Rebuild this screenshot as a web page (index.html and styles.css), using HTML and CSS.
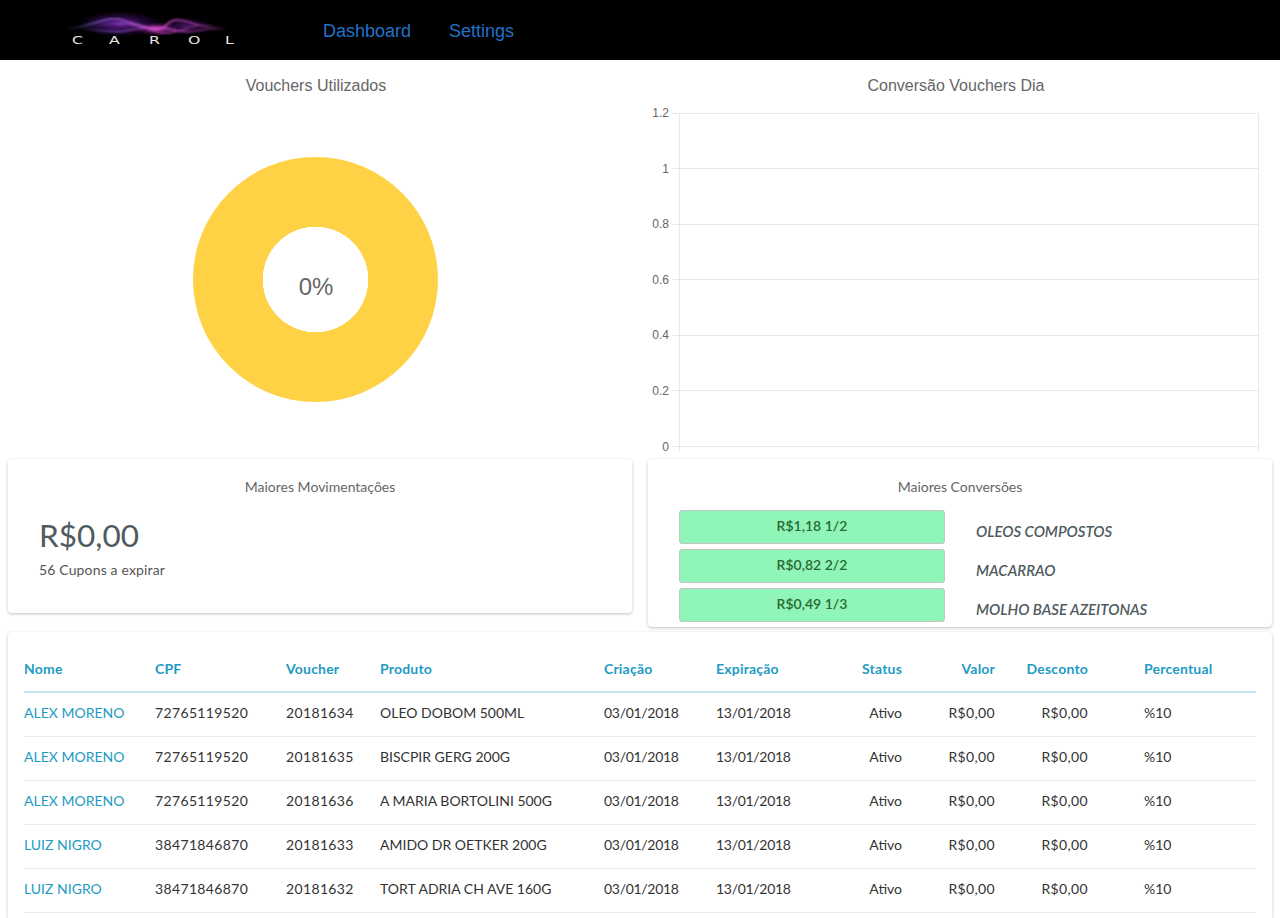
FILE: index.html
```html
<!DOCTYPE html>
<html lang="pt-BR">
<head>
<meta charset="utf-8">
<title>Carol Dashboard</title>
<link rel="stylesheet" href="styles.css">
</head>
<body>
<header class="navbar">
  <svg class="logo" width="190" height="50" viewBox="0 0 190 50" aria-label="Carol">
    <defs>
      <linearGradient id="wave" x1="0" x2="1" y1="0" y2="0">
        <stop offset="0" stop-color="#6a7fd0" stop-opacity="0"/>
        <stop offset=".2" stop-color="#7a5cc8"/>
        <stop offset=".55" stop-color="#e458de"/>
        <stop offset=".8" stop-color="#a03aa0"/>
        <stop offset="1" stop-color="#803080" stop-opacity="0"/>
      </linearGradient>
      <radialGradient id="glow">
        <stop offset="0" stop-color="#8226b8" stop-opacity=".85"/>
        <stop offset="1" stop-color="#4a1080" stop-opacity="0"/>
      </radialGradient>
      <radialGradient id="pink">
        <stop offset="0" stop-color="#c834b8" stop-opacity=".9"/>
        <stop offset="1" stop-color="#801080" stop-opacity="0"/>
      </radialGradient>
      <filter id="soft"><feGaussianBlur stdDeviation=".8"/></filter>
    </defs>
    <ellipse cx="60" cy="19" rx="42" ry="13" fill="url(#glow)"/>
    <ellipse cx="97" cy="24" rx="22" ry="7" fill="url(#pink)"/>
    <ellipse cx="125" cy="21" rx="28" ry="9" fill="url(#glow)" opacity=".6"/>
    <g fill="none" stroke="url(#wave)" filter="url(#soft)">
      <path d="M7 24C30 22 45 12 57 14S85 24 97 24 105 15 117 15 135 22 167 24" stroke-width="1.5"/>
      <path d="M20 24C40 25 55 28 65 26S90 22 97 22 120 29 135 26 155 24 170 24" stroke-width="1.2"/>
      <path d="M35 22C50 16 70 18 85 23S105 30 118 26 140 18 160 22"/>
    </g>
    <text class="logo-text" transform="scale(1.5 1)" x="8 32.700 59.300 85.300 110" y="39">CAROL</text>
  </svg>
  <nav class="nav-links">
    <a href="#" class="nav-link">Dashboard</a>
    <a href="#" class="nav-link">Settings</a>
  </nav>
</header>

<main class="content">
  <section class="charts">
    <div class="chart-col">
      <h2 class="chart-title">Vouchers Utilizados</h2>
      <div class="donut-wrap">
        <div class="donut"><span class="donut-label">0%</span></div>
      </div>
    </div>
    <div class="chart-col">
      <h2 class="chart-title">Conversão Vouchers Dia</h2>
      <svg class="line-chart" width="640" height="353" viewBox="640 106 640 353">
        <g class="grid">
          <path d="M672 113.500H1258.500M672 168.500H1258.500M672 224.500H1258.500M672 279.500H1258.500M672 335.500H1258.500M672 390.500H1258.500M672 446.500H1258.500M679.500 113V451M1258.500 113V451"/>
        </g>
        <g class="ticks">
          <text x="669" y="117">1.2</text>
          <text x="669" y="173">1</text>
          <text x="669" y="228">0.8</text>
          <text x="669" y="284">0.6</text>
          <text x="669" y="339">0.4</text>
          <text x="669" y="395">0.2</text>
          <text x="669" y="451">0</text>
        </g>
      </svg>
    </div>
  </section>

  <section class="cards">
    <article class="card card-left">
      <h3 class="card-title">Maiores Movimentações</h3>
      <p class="amount">R$0,00</p>
      <p class="expire">56 Cupons a expirar</p>
    </article>
    <article class="card card-right">
      <h3 class="card-title">Maiores Conversões</h3>
      <div class="conv-row"><div class="conv-badge">R$1,18 1/2</div><em class="conv-name">OLEOS COMPOSTOS</em></div>
      <div class="conv-row"><div class="conv-badge">R$0,82 2/2</div><em class="conv-name">MACARRAO</em></div>
      <div class="conv-row"><div class="conv-badge">R$0,49 1/3</div><em class="conv-name">MOLHO BASE AZEITONAS</em></div>
    </article>
  </section>

  <section class="card table-card">
    <table class="vouchers">
      <thead>
        <tr>
          <th class="c-nome">Nome</th><th class="c-cpf">CPF</th><th class="c-voucher">Voucher</th><th class="c-produto">Produto</th><th class="c-criacao">Criação</th><th class="c-exp">Expiração</th><th class="c-status num">Status</th><th class="c-valor num">Valor</th><th class="c-desc num">Desconto</th><th class="c-perc">Percentual</th>
        </tr>
      </thead>
      <tbody>
        <tr><td class="name">ALEX MORENO</td><td class="digits">72765119520</td><td class="digits">20181634</td><td>OLEO DOBOM 500ML</td><td class="date">03/01/2018</td><td class="date">13/01/2018</td><td class="num">Ativo</td><td class="num digits">R$0,00</td><td class="num digits">R$0,00</td><td class="c-perc">%10</td></tr>
        <tr><td class="name">ALEX MORENO</td><td class="digits">72765119520</td><td class="digits">20181635</td><td>BISCPIR GERG 200G</td><td class="date">03/01/2018</td><td class="date">13/01/2018</td><td class="num">Ativo</td><td class="num digits">R$0,00</td><td class="num digits">R$0,00</td><td class="c-perc">%10</td></tr>
        <tr><td class="name">ALEX MORENO</td><td class="digits">72765119520</td><td class="digits">20181636</td><td>A MARIA BORTOLINI 500G</td><td class="date">03/01/2018</td><td class="date">13/01/2018</td><td class="num">Ativo</td><td class="num digits">R$0,00</td><td class="num digits">R$0,00</td><td class="c-perc">%10</td></tr>
        <tr><td class="name">LUIZ NIGRO</td><td class="digits">38471846870</td><td class="digits">20181633</td><td>AMIDO DR OETKER 200G</td><td class="date">03/01/2018</td><td class="date">13/01/2018</td><td class="num">Ativo</td><td class="num digits">R$0,00</td><td class="num digits">R$0,00</td><td class="c-perc">%10</td></tr>
        <tr><td class="name">LUIZ NIGRO</td><td class="digits">38471846870</td><td class="digits">20181632</td><td>TORT ADRIA CH AVE 160G</td><td class="date">03/01/2018</td><td class="date">13/01/2018</td><td class="num">Ativo</td><td class="num digits">R$0,00</td><td class="num digits">R$0,00</td><td class="c-perc">%10</td></tr>
      </tbody>
    </table>
  </section>
</main>
</body>
</html>
```
FILE: styles.css
```css
* { box-sizing: border-box; }
html, body { margin: 0; height: 918px; overflow: hidden; background: #fff; }
body { font-family: "Lato", "Noto Sans", sans-serif; font-size: 14px; color: #333; }

.navbar { display: flex; align-items: center; height: 60px; background: #000; padding-left: 60px; }
.logo { display: block; flex: none; }
.logo-text { font-family: "DejaVu Sans", sans-serif; font-size: 10.500px; fill: #e6e6e6; }
.nav-links { display: flex; gap: 38px; margin-left: 73px; padding-top: 2px; }
.nav-link { font-family: "Liberation Sans", Arial, sans-serif; font-size: 18px; color: #2272c8; text-decoration: none; }

.charts { display: flex; height: 399px; }
.chart-col { width: 640px; flex: none; display: flex; flex-direction: column; align-items: center; }
.chart-title { margin: 16px 0 0 -8px; height: 30px; line-height: 20px; font-family: "Liberation Sans", Arial, sans-serif; font-size: 16px; font-weight: 400; color: #666; }
.donut-wrap { margin-left: -10px; padding-top: 51px; }
.donut { width: 245px; height: 245px; border-radius: 50%; background: radial-gradient(circle closest-side, #fff 0 52.5px, #ffd246 53px); display: flex; align-items: center; justify-content: center; }
.donut-label { font-family: "Liberation Sans", Arial, sans-serif; font-size: 24px; color: #666; padding: 14px 0 0 2px; }
.line-chart { display: block; }
.grid path { fill: none; stroke: #e8e8e8; stroke-width: 1; }
.ticks text { font-family: "Liberation Sans", Arial, sans-serif; font-size: 12px; fill: #666; text-anchor: end; }

.cards { display: flex; gap: 16px; padding: 0 8px; align-items: flex-start; }
.card { background: #fff; border-radius: 4px; box-shadow: 0 1px 3px rgba(0,0,0,.25); }
.card-left { flex: 1 1 0; height: 154px; padding: 20px 31px 0; }
.card-right { flex: 1 1 0; height: 168px; padding: 20px 31px 0; overflow: hidden; }
.card-title { margin: 0; font-size: 14px; font-weight: 400; line-height: 16px; text-align: center; color: #666; }
.card-left .card-title { margin-bottom: 22px; }
.card-right .card-title { margin-bottom: 15px; }
.amount { margin: 0; font-size: 31.500px; line-height: 36px; color: #4f5b5e; }
.expire { margin: 8px 0 0; line-height: 18px; color: #555; letter-spacing: .15px; }
.conv-row { display: flex; margin-bottom: 5px; height: 34px; }
.conv-badge { width: 266px; flex: none; height: 34px; background: #8ff5b9; border: 1px solid #c4c4c4; border-radius: 3px; text-align: center; line-height: 29px; font-size: 14px; font-weight: 600; color: #2b6a30; }
.conv-name { margin-left: 31px; padding-top: 12px; line-height: 18px; font-size: 15px; font-weight: 600; font-style: italic; color: #4f5b5e; white-space: nowrap; }

.table-card { margin: 5px 8px 0; height: 286px; padding: 16px 16px 0; border-radius: 4px 4px 0 0; }
.vouchers { width: 100%; border-collapse: collapse; table-layout: fixed; }
.vouchers th { height: 44px; padding: 0 16px 2px 0; text-align: left; font-weight: 700; color: #1e9bc4; border-bottom: 2px solid #c9e6f0; white-space: nowrap; letter-spacing: .2px; }
.vouchers td { height: 44px; padding: 0 16px 4px 0; border-bottom: 1px solid #eaeaea; color: #333; white-space: nowrap; }
.vouchers td.name { color: #1e9bc4; }
.vouchers td.digits { letter-spacing: .35px; }
.vouchers td.date { letter-spacing: -.3px; }
.vouchers .num { text-align: right; }
.vouchers .c-perc { padding-left: 40px; padding-right: 0; }
.c-nome { width: 131px; } .c-cpf { width: 131px; } .c-voucher { width: 94px; } .c-produto { width: 224px; }
.c-criacao { width: 112px; } .c-exp { width: 114px; } .c-status { width: 88px; } .c-valor { width: 93px; } .c-desc { width: 93px; }
```
